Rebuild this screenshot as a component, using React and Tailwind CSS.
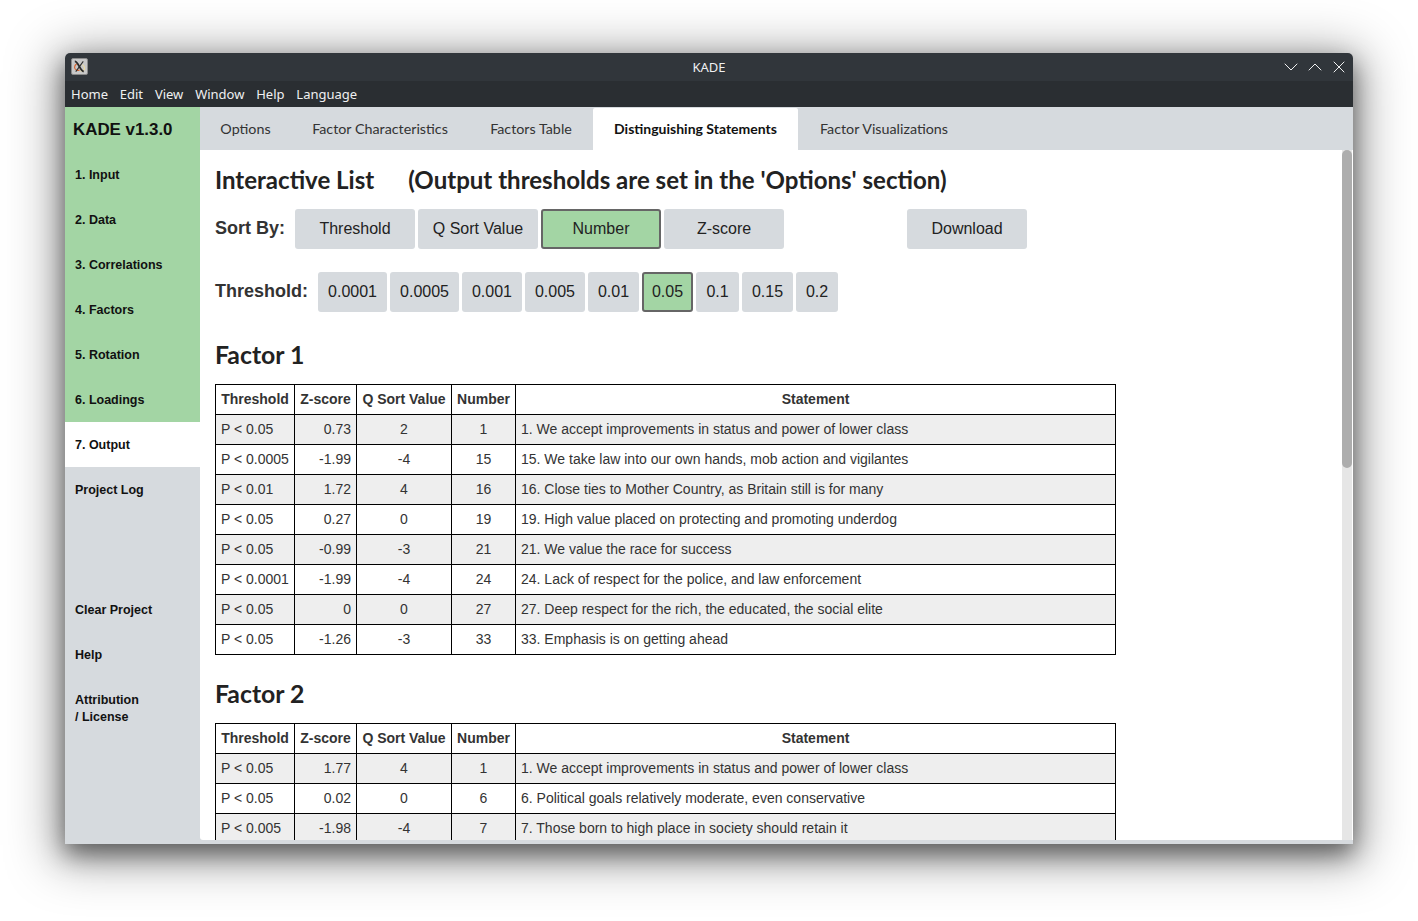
import React from 'react'
import { ChevronDown, ChevronUp, X } from 'lucide-react'

const sideTop = ['1. Input', '2. Data', '3. Correlations', '4. Factors', '5. Rotation', '6. Loadings']
const menus = ['Home', 'Edit', 'View', 'Window', 'Help', 'Language']
const tabs = [
  { label: 'Options', w: 'w-[91px]' },
  { label: 'Factor Characteristics', w: 'w-[178px]' },
  { label: 'Factors Table', w: 'w-[124px]' },
  { label: 'Distinguishing Statements', w: 'w-[205px]', active: true },
  { label: 'Factor Visualizations', w: 'w-[172px]' },
]
const thresholds = [
  { v: '0.0001', w: 'w-[69px]' },
  { v: '0.0005', w: 'w-[69px]' },
  { v: '0.001', w: 'w-[60px]' },
  { v: '0.005', w: 'w-[60px]' },
  { v: '0.01', w: 'w-[51px]' },
  { v: '0.05', w: 'w-[51px]', active: true },
  { v: '0.1', w: 'w-[43px]' },
  { v: '0.15', w: 'w-[51px]' },
  { v: '0.2', w: 'w-[42px]' },
]
const factor1 = [
  ['P < 0.05', '0.73', '2', '1', '1. We accept improvements in status and power of lower class'],
  ['P < 0.0005', '-1.99', '-4', '15', '15. We take law into our own hands, mob action and vigilantes'],
  ['P < 0.01', '1.72', '4', '16', '16. Close ties to Mother Country, as Britain still is for many'],
  ['P < 0.05', '0.27', '0', '19', '19. High value placed on protecting and promoting underdog'],
  ['P < 0.05', '-0.99', '-3', '21', '21. We value the race for success'],
  ['P < 0.0001', '-1.99', '-4', '24', '24. Lack of respect for the police, and law enforcement'],
  ['P < 0.05', '0', '0', '27', '27. Deep respect for the rich, the educated, the social elite'],
  ['P < 0.05', '-1.26', '-3', '33', '33. Emphasis is on getting ahead'],
]
const factor2 = [
  ['P < 0.05', '1.77', '4', '1', '1. We accept improvements in status and power of lower class'],
  ['P < 0.05', '0.02', '0', '6', '6. Political goals relatively moderate, even conservative'],
  ['P < 0.005', '-1.98', '-4', '7', '7. Those born to high place in society should retain it'],
]

const SideItem = ({ children, className = '' }) => (
  <div className={`h-[45px] flex items-center pl-[10px] pt-[2px] text-[12.5px] leading-[17px] font-bold text-[#111] ${className}`}>
    {children}
  </div>
)

const SortBtn = ({ children, active, className = 'w-[120px]' }) => (
  <div
    className={`h-[40px] flex items-center justify-center rounded-[3px] text-[16px] text-[#222] ${className} ${
      active ? 'bg-[#a3d5a4] border-2 border-[#666]' : 'bg-[#d6dade]'
    }`}
  >
    {children}
  </div>
)

const FactorTable = ({ rows }) => (
  <table className="w-[901px] table-fixed border-collapse text-[14px] text-[#333]">
    <colgroup>
      <col className="w-[79px]" />
      <col className="w-[62px]" />
      <col className="w-[95px]" />
      <col className="w-[64px]" />
      <col />
    </colgroup>
    <thead>
      <tr className="h-[30px] font-bold">
        <th className="border border-black font-bold pb-[1px]">Threshold</th>
        <th className="border border-black font-bold pb-[1px]">Z-score</th>
        <th className="border border-black font-bold pb-[1px] whitespace-nowrap">Q Sort Value</th>
        <th className="border border-black font-bold pb-[1px]">Number</th>
        <th className="border border-black font-bold pb-[1px]">Statement</th>
      </tr>
    </thead>
    <tbody>
      {rows.map((r, i) => (
        <tr key={i} className={`h-[30px] ${i % 2 === 0 ? 'bg-[#eeeeee]' : 'bg-white'}`}>
          <td className="border border-black px-[5px] whitespace-nowrap">{r[0]}</td>
          <td className="border border-black px-[5px] text-right">{r[1]}</td>
          <td className="border border-black px-[5px] text-center">{r[2]}</td>
          <td className="border border-black px-[5px] text-center">{r[3]}</td>
          <td className="border border-black px-[5px]">{r[4]}</td>
        </tr>
      ))}
    </tbody>
  </table>
)

export default function App() {
  return (
    <div className="w-[1418px] h-[921px] overflow-hidden bg-white pt-[53px] pl-[65px] font-['Liberation_Sans',sans-serif]">
      <div className="w-[1288px] h-[791px] flex flex-col rounded-t-[5px] overflow-hidden shadow-[0_10px_24px_rgba(0,0,0,0.5),0_8px_50px_10px_rgba(0,0,0,0.35)]">
        {/* title bar */}
        <div className="relative h-[28px] shrink-0 bg-[#31363b] flex items-center justify-center pt-[1px] text-[13px] text-[#eff0f1] font-['Noto_Sans',sans-serif]">
          <div className="absolute left-[6px] top-[5px] w-[17px] h-[17px] rounded-[2px] bg-[#c8c8c8] border border-[#8a8a8a]">
            <svg viewBox="0 0 16 16" className="w-full h-full">
              <path d="M5 5c-3 2-3 6 0 7 1 .4 2 .2 3-.3" stroke="#d9622b" strokeWidth="1.2" fill="none" />
              <path d="M11 6c3 2 3 5 1 6.500-1 .6-2 .5-3 0" stroke="#ecdca0" strokeWidth="1.2" fill="none" />
              <path d="M3 2.500c3.500 0 5 9 9.500 11" stroke="#2b2b2b" strokeWidth="2" fill="none" />
              <path d="M12 2.500 4 13.500" stroke="#2b2b2b" strokeWidth="1.1" fill="none" />
            </svg>
          </div>
          KADE
          <div className="absolute right-[2px] top-[2px] flex text-[#eff0f1]">
            <ChevronDown size={24} strokeWidth={1} />
            <ChevronUp size={24} strokeWidth={1} />
            <div className="w-[24px] h-[24px] flex items-center justify-center">
              <X size={20} strokeWidth={1.2} />
            </div>
          </div>
        </div>
        {/* menu bar */}
        <div className="h-[26px] shrink-0 bg-[#2a2e32] flex items-center gap-[11.8px] pl-[6px] pt-[1px] text-[13px] text-[#eff0f1] font-['Noto_Sans',sans-serif]">
          {menus.map((m) => (
            <span key={m}>{m}</span>
          ))}
        </div>
        <div className="flex-1 min-h-0 flex bg-[#d6dade]">
          {/* sidebar */}
          <div className="w-[135px] shrink-0 flex flex-col">
            <div className="bg-[#a3d5a4]">
              <div className="h-[45px] flex items-center pl-[8px] text-[16.9px] font-bold text-[#111]">KADE v1.3.0</div>
              {sideTop.map((s) => (
                <SideItem key={s}>{s}</SideItem>
              ))}
            </div>
            <SideItem className="bg-white">7. Output</SideItem>
            <SideItem>Project Log</SideItem>
            <div className="h-[75px]" />
            <SideItem>Clear Project</SideItem>
            <SideItem>Help</SideItem>
            <SideItem className="mt-[8px]">
              <span>
                Attribution
                <br />/ License
              </span>
            </SideItem>
          </div>
          {/* main */}
          <div className="flex-1 min-w-0 flex flex-col">
            <div className="h-[43px] shrink-0 flex items-start text-[14.3px] text-[#333] font-['Lato',sans-serif]">
              {tabs.map((t) => (
                <div
                  key={t.label}
                  className={`${t.w} flex items-center justify-center ${
                    t.active ? 'h-[43px] mt-[1px] pb-[2px] bg-white text-[14px] font-bold text-[#111] rounded-t-[2px]' : 'h-[43px]'
                  }`}
                >
                  {t.label}
                </div>
              ))}
            </div>
            <div className="relative h-[690px] shrink-0 overflow-hidden bg-white rounded-bl-[3px] pl-[15px] pt-[15px]">
              {/* scrollbar */}
              <div className="absolute right-[1px] top-0 bottom-0 w-[10px] bg-[#e6e6e6]">
                <div className="h-[318px] w-full rounded-[5px] bg-[#adadad]" />
              </div>
              <h1 className="h-[30px] flex items-center gap-[34px] text-[24.05px] font-bold text-[#222] font-['Lato',sans-serif] whitespace-nowrap">
                <span>Interactive List</span>
                <span>(Output thresholds are set in the 'Options' section)</span>
              </h1>
              <div className="mt-[14px] flex items-center">
                <span className="w-[80px] mb-[2px] text-[18px] font-bold text-[#333]">Sort By:</span>
                <div className="flex gap-[3px]">
                  <SortBtn>Threshold</SortBtn>
                  <SortBtn>Q Sort Value</SortBtn>
                  <SortBtn active>Number</SortBtn>
                  <SortBtn>Z-score</SortBtn>
                </div>
                <SortBtn className="w-[120px] ml-[123px]">Download</SortBtn>
              </div>
              <div className="mt-[23px] flex items-center">
                <span className="w-[103px] mb-[2px] text-[18px] font-bold text-[#333]">Threshold:</span>
                <div className="flex gap-[3px]">
                  {thresholds.map((t) => (
                    <SortBtn key={t.v} active={t.active} className={t.w}>
                      {t.v}
                    </SortBtn>
                  ))}
                </div>
              </div>
              <h2 className="mt-[27px] mb-[13px] h-[32px] flex items-center text-[24.8px] font-bold text-[#222] font-['Lato',sans-serif]">
                Factor 1
              </h2>
              <FactorTable rows={factor1} />
              <h2 className="mt-[23px] mb-[13px] h-[32px] flex items-center text-[24.8px] font-bold text-[#222] font-['Lato',sans-serif]">
                Factor 2
              </h2>
              <FactorTable rows={factor2} />
            </div>
          </div>
        </div>
      </div>
    </div>
  )
}
